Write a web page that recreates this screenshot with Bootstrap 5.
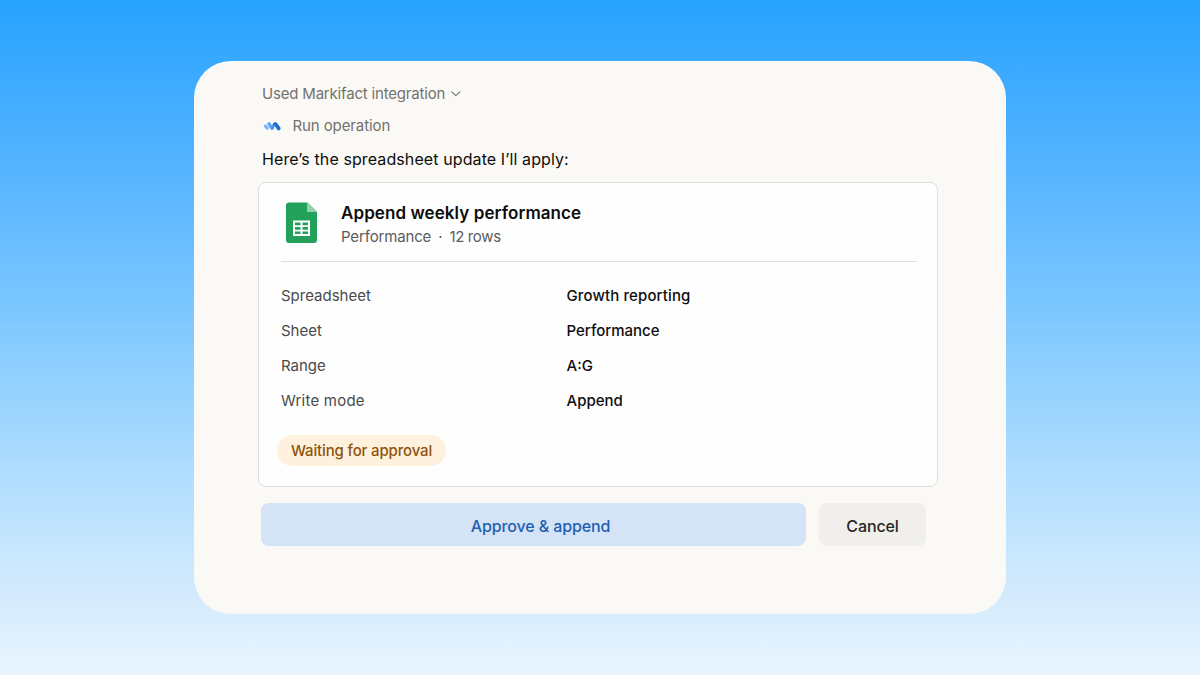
<!DOCTYPE html>
<html lang="en">
<head>
<meta charset="utf-8">
<meta name="viewport" content="width=device-width, initial-scale=1">
<title>Append weekly performance</title>
<link href="https://cdn.jsdelivr.net/npm/bootstrap@5.3.0/dist/css/bootstrap.min.css" rel="stylesheet">
<style>
body{font-family:Inter,"Liberation Sans",sans-serif;font-size:15px;line-height:20px;color:#0d0d0d;height:675px;overflow:hidden;background:linear-gradient(180deg,#27a3ff 0%,#4cb0ff 20%,#66bcff 34%,#7cc7ff 46%,#9ad4fe 60%,#b1deff 71%,#c8e7fe 82%,#d7ecfd 90%,#e9f5ff 100%)}
.panel{width:812px;height:553px;margin:61px 0 0 194px;border-radius:37px;background:#faf9f5;padding:22px 67px 0 64px}
.muted{color:#73726f}
.used{letter-spacing:-.19px;padding-top:1px;height:20px}
.op-run{letter-spacing:-.1px;margin-top:13px}
.run-label{margin-left:10.5px}
.intro{font-size:16px;letter-spacing:.1px;margin-top:13px}
.op-card{border:1px solid #dedede;border-radius:8px;width:680px;height:305px;margin-top:13px;padding:18px 20px 0 22px;background:#fefefe}
.op-head{height:61px;border-bottom:1px solid #dedede}
.op-title{font-size:17px;font-weight:600;line-height:24px;letter-spacing:.08px}
.sub-text{color:#5c5c5c;line-height:23px;letter-spacing:-.15px;gap:7px}
.row-count{letter-spacing:-.35px}
.field-label{width:285.5px;color:#4a4a4a}
.field-label.wide{letter-spacing:.22px}
.field-value{font-weight:500;color:#0d0d0d}
.field-value.wide{letter-spacing:.12px}
.fields{gap:15px;padding-top:24px}
.waiting{background:#fef1de;color:#8f530b;font-weight:500;letter-spacing:-.15px;height:31px;width:169px;margin:24px 0 0 -4px}
.actions{margin:16px 9px 0 3px;gap:13px}
.actions .btn{height:43px;border:0;border-radius:8px;font-weight:500;line-height:20px;font-size:16px;padding:2px 0 0;letter-spacing:-.12px}
.actions .approve{width:545px;background:#d5e3f7;color:#2160b0;padding-left:14px}
.actions .cancel{width:107px;background:#f0efeb;color:#262625}
</style>
</head>
<body>
<main class="panel">
  <div class="d-flex align-items-center muted ps-1 used"><span>Used Markifact integration</span>
    <svg class="ms-1" width="13" height="12" viewBox="0 0 13 12" fill="none" stroke="currentColor" stroke-width="1.1" stroke-linecap="round" stroke-linejoin="round"><path d="M2.800 3.800 6.800 7.600l4-3.800"/></svg></div>
  <div class="d-flex align-items-center muted ps-1 op-run">
    <svg width="20" height="12" viewBox="0 0 20 12" fill="none" stroke-linecap="round" stroke-linejoin="round"><path d="M3.400 6 5.300 8.200" stroke="#72b4f8" stroke-width="3"/><path d="M7 3.900 10 8.400" stroke="#5aa5f3" stroke-width="3.400"/><path d="M10.800 7.500 12 4" stroke="#3d8fea" stroke-width="2.400"/><path d="M13.300 3.900 16.700 8.400" stroke="#1f6fd6" stroke-width="3.800"/></svg>
    <span class="run-label">Run operation</span></div>
  <div class="intro ps-1">Here’s the spreadsheet update I’ll apply:</div>
  <section class="op-card">
    <header class="op-head d-flex">
      <svg width="60" height="44" viewBox="0 0 60 44"><path d="M8 1.500h18.500L36 11v28a3 3 0 0 1-3 3H8a3 3 0 0 1-3-3V4.500a3 3 0 0 1 3-3z" fill="#23a05a"/><path d="M26 1.500 36 11H26z" fill="#92d1ab"/><path fill="#fff" fill-rule="evenodd" d="M12 19.500h17v15.500H12zM14 21.500h5.500v2.800H14zM21.500 21.500H27v2.800h-5.500zM14 26h5.500v2.800H14zM21.500 26H27v2.800h-5.500zM14 30.500h5.500v2.500H14zM21.500 30.500H27v2.500h-5.500z"/></svg>
      <div><div class="op-title">Append weekly performance</div><div class="sub-text d-flex"><span>Performance</span><span>·</span><span class="row-count">12 rows</span></div></div>
    </header>
    <div class="fields d-flex flex-column">
      <div class="d-flex"><span class="field-label">Spreadsheet</span><span class="field-value wide">Growth reporting</span></div>
      <div class="d-flex"><span class="field-label">Sheet</span><span class="field-value">Performance</span></div>
      <div class="d-flex"><span class="field-label">Range</span><span class="field-value">A:G</span></div>
      <div class="d-flex"><span class="field-label wide">Write mode</span><span class="field-value">Append</span></div>
    </div>
    <div class="waiting rounded-pill d-flex align-items-center justify-content-center">Waiting for approval</div>
  </section>
  <div class="actions d-flex"><button class="btn approve">Approve &amp; append</button><button class="btn cancel">Cancel</button></div>
</main>
<script src="https://cdn.jsdelivr.net/npm/bootstrap@5.3.0/dist/js/bootstrap.bundle.min.js"></script>
</body>
</html>
